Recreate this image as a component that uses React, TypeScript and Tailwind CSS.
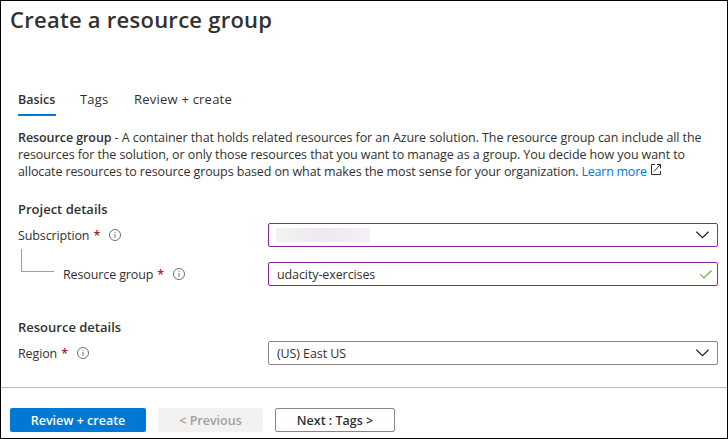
import type { ReactNode } from "react";

function InfoIcon() {
  return (
    <svg width="12" height="12" viewBox="0 0 12 12" fill="none" className="shrink-0">
      <circle cx="6" cy="6" r="5.5" stroke="#605e5c" strokeWidth="0.9" />
      <path d="M6 5v4M6 2.9v1.1" stroke="#777" strokeWidth="1" />
    </svg>
  );
}

function Chevron() {
  return (
    <svg width="13" height="8" viewBox="0 0 13 8" fill="none" className="shrink-0">
      <path d="M0.4 0.7L6.5 6.7L12.6 0.7" stroke="#222" strokeWidth="1.2" />
    </svg>
  );
}

function Label({ text, className }: { text: string; className: string }) {
  return (
    <div className={`flex h-6 items-center ${className}`}>
      <span className="tracking-[-0.12px] whitespace-nowrap">{text}</span>
      <span className="ml-1 w-1.5 text-[12.5px] font-semibold text-[#a4262c]">*</span>
      <span className="ml-2.5">
        <InfoIcon />
      </span>
    </div>
  );
}

function Field({ children, border }: { children: ReactNode; border: string }) {
  return (
    <div className={`flex h-6 w-[450px] items-center justify-between rounded-[2px] border ${border}`}>
      {children}
    </div>
  );
}

export default function App() {
  return (
    <div className="flex h-[439px] w-[728px] flex-col overflow-hidden border border-black bg-white font-['Open_Sans','Noto_Sans',sans-serif] text-[12.5px] leading-[17px] text-[#323130]">
      <h1 className="mt-[4px] ml-[9px] h-7 text-[22px] leading-7 font-semibold tracking-[0.26px] whitespace-nowrap">
        Create a resource group
      </h1>

      <nav className="mt-[58px] ml-[17px] flex h-[25px]">
        <span className="h-[25px] w-[38px] border-b-2 border-[#0078d4] font-semibold whitespace-nowrap">Basics</span>
        <span className="ml-6 w-[30px] text-[13px] tracking-[0.2px] whitespace-nowrap">Tags</span>
        <span className="ml-6 text-[13px] tracking-[0.22px] whitespace-nowrap">Review + create</span>
      </nav>

      <div className="mt-[13px] ml-[17px] flex flex-col whitespace-nowrap">
        <p className="tracking-[-0.08px]">
          <span className="font-semibold">Resource group</span>
          <span> - A container that holds related resources for an Azure solution. The resource group can include all the</span>
        </p>
        <p className="tracking-[-0.09px]">
          resources for the solution, or only those resources that you want to manage as a group. You decide how you want to
        </p>
        <p className="flex tracking-[-0.11px]">
          <span>allocate resources to resource groups based on what makes the most sense for your organization.</span>
          <a className="ml-[3px] tracking-[-0.25px] text-[#0078d4]">Learn more</a>
          <svg width="11" height="11" viewBox="0 0 11 11" fill="none" className="mt-px ml-1">
            <path d="M4 0.5H0.5V10.5H9.5V7M6 0.5H9.5V4.5M9.5 0.5L3 7.5" stroke="#323130" />
          </svg>
        </p>
      </div>

      <h2 className="mt-[21px] ml-[17px] text-[13px] font-semibold">Project details</h2>
      <div className="mt-[5px] ml-[17px] flex">
        <Label text="Subscription" className="w-[250px]" />
        <Field border="border-[#8a25a3]">
          <span className="ml-[7px] h-3.5 w-[94px] bg-linear-to-r from-[#f3f2f3] via-[#eee8ef] to-[#f4f0f5]" />
          <span className="mr-2">
            <Chevron />
          </span>
        </Field>
      </div>
      <div className="mt-[15px] ml-[17px] flex">
        <div className="-mt-[13px] ml-[3px] h-[23px] w-[33px] border-b border-l border-[#a19f9d]" />
        <Label text="Resource group" className="ml-[9px] w-[205px]" />
        <Field border="border-[#8a25a3]">
          <span className="ml-2 tracking-[-0.1px]">udacity-exercises</span>
          <svg width="12" height="9" viewBox="0 0 12 9" fill="none" className="mr-[5px]">
            <path d="M0.4 4.4L4 8L11.6 0.5" stroke="#6bb13c" strokeWidth="1.2" />
          </svg>
        </Field>
      </div>

      <h2 className="mt-[33px] ml-[17px] text-[13px] font-semibold">Resource details</h2>
      <div className="mt-[5px] ml-[17px] flex">
        <Label text="Region" className="w-[250px]" />
        <Field border="border-[#8a8886]">
          <span className="ml-2 tracking-[-0.1px]">(US) East US</span>
          <span className="mr-2">
            <Chevron />
          </span>
        </Field>
      </div>

      <footer className="mt-[22px] flex border-t border-[#b8b8b8] pt-5 pl-[9px] font-semibold whitespace-nowrap">
        <button className="h-6 w-[136px] rounded-[2px] bg-[#0078d4] text-white">Review + create</button>
        <button className="ml-3 h-6 w-[105px] rounded-[2px] bg-[#f3f2f1] text-[#a19f9d]">&lt; Previous</button>
        <button className="ml-3 h-6 w-[120px] rounded-[2px] border border-[#8a8886]">Next : Tags &gt;</button>
      </footer>
    </div>
  );
}
